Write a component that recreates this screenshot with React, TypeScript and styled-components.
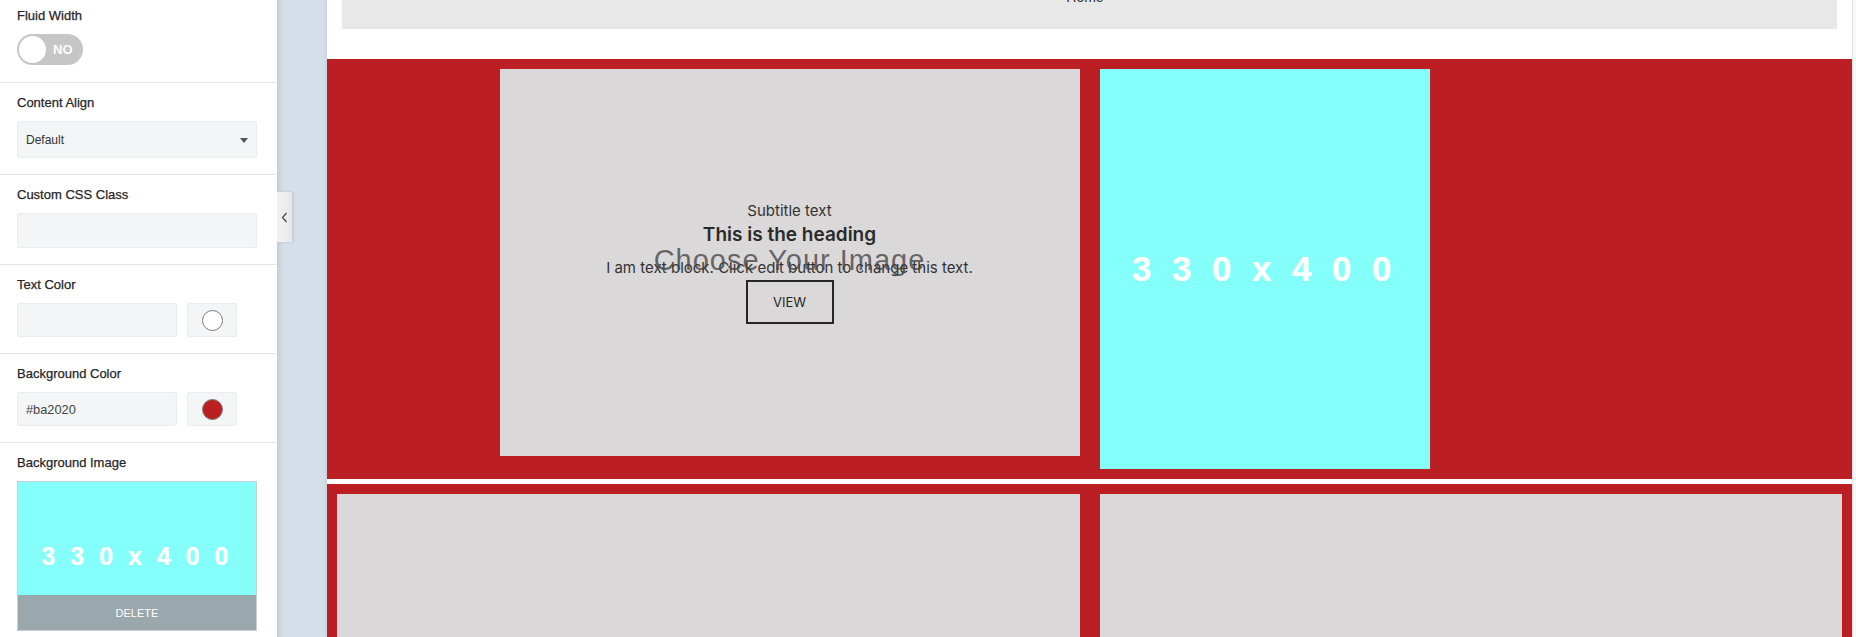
import React from "react";
import styled, { createGlobalStyle } from "styled-components";

const GlobalStyle = createGlobalStyle`
  html, body {
    margin: 0;
    padding: 0;
    width: 1856px;
    height: 637px;
    overflow: hidden;
    background: #ffffff;
  }
  body {
    font-family: "Liberation Sans", Arial, sans-serif;
  }
  *, *::before, *::after {
    box-sizing: border-box;
  }
`;

const Shell = styled.div`
  display: flex;
  width: 1856px;
  height: 637px;
  overflow: hidden;
`;

/* ---------- Sidebar ---------- */

const Sidebar = styled.aside`
  flex: 0 0 277px;
  background: #ffffff;
  position: relative;
  z-index: 2;
  overflow: hidden;
`;

const Field = styled.section<{ $first?: boolean }>`
  display: flex;
  flex-direction: column;
  align-items: flex-start;
  gap: 11px;
  padding: ${(p) => (p.$first ? "8px 20px 17px 17px" : "12px 20px 16px 17px")};
  border-top: ${(p) => (p.$first ? "none" : "1px solid #e3e5e6")};
`;

const Label = styled.div`
  font-size: 13px;
  line-height: 15px;
  color: #262626;
  -webkit-text-stroke: 0.25px #262626;
`;

const Toggle = styled.div`
  width: 66px;
  height: 31px;
  border-radius: 16px;
  background: #c6c6c6;
  display: flex;
  align-items: center;
  padding-left: 2px;
`;

const Knob = styled.span`
  width: 27px;
  height: 27px;
  border-radius: 50%;
  background: #ffffff;
`;

const ToggleText = styled.span`
  margin-left: 7px;
  font-size: 13px;
  font-weight: 700;
  color: #ffffff;
`;

const Select = styled.div`
  width: 240px;
  height: 37px;
  background: #f3f5f6;
  border: 1px solid #eaedee;
  border-radius: 2px;
  display: flex;
  align-items: center;
  justify-content: space-between;
  padding: 0 8px 0 8px;
  font-size: 12px;
  color: #333333;
`;

const Caret = styled.span`
  width: 0;
  height: 0;
  border-left: 4px solid transparent;
  border-right: 4px solid transparent;
  border-top: 5px solid #555555;
  margin-top: 1px;
`;

const TextInput = styled.div<{ $width?: number; $height?: number }>`
  width: ${(p) => p.$width ?? 240}px;
  height: ${(p) => p.$height ?? 34}px;
  background: #f3f5f6;
  border: 1px solid #eaedee;
  border-radius: 2px;
  display: flex;
  align-items: center;
  padding: 0 8px;
  font-size: 12.8px;
  color: #444444;
`;

const ColorRow = styled.div`
  display: flex;
  gap: 10px;
`;

const SwatchButton = styled.div`
  width: 50px;
  height: 34px;
  background: #f3f5f6;
  border: 1px solid #eaedee;
  border-radius: 2px;
  display: flex;
  align-items: center;
  justify-content: center;
`;

const SwatchDot = styled.span<{ $color: string }>`
  width: 21px;
  height: 21px;
  border-radius: 50%;
  background: ${(p) => p.$color};
  border: 1px solid #7a7a7a;
`;

const Preview = styled.div`
  position: relative;
  width: 240px;
  height: 150px;
  border: 1px solid #c6d1d7;
  background: #84fffa;
  display: flex;
  align-items: center;
  justify-content: center;
`;

const DeleteBar = styled.div`
  position: absolute;
  left: 0;
  right: 0;
  bottom: 0;
  height: 35px;
  background: #9aa8ae;
  color: #ffffff;
  font-size: 11px;
  display: flex;
  align-items: center;
  justify-content: center;
`;

const PlaceholderText = styled.span<{ $size: number; $spacing: number }>`
  font-family: "Liberation Sans", Arial, sans-serif;
  font-weight: 700;
  font-size: ${(p) => p.$size}px;
  letter-spacing: ${(p) => p.$spacing}px;
  color: #ffffff;
  white-space: pre;
  text-shadow: 0 0 1px rgba(255, 255, 255, 0.6);
`;

/* ---------- Workspace ---------- */

const Workspace = styled.main`
  flex: 1;
  display: flex;
  position: relative;
  background: #d4dfea;
  padding-left: 50px;
  box-shadow: inset 7px 0 5px -5px rgba(0, 0, 0, 0.1);
`;

const CollapseTab = styled.div`
  position: absolute;
  left: 0;
  top: 192px;
  width: 15px;
  height: 50px;
  background: linear-gradient(to right, #f2f2f2, #e8e8e8);
  box-shadow: 1px 0 3px rgba(0, 0, 0, 0.12);
  display: flex;
  align-items: center;
  justify-content: center;
`;

const Canvas = styled.div`
  flex: 1;
  background: #ffffff;
  overflow: hidden;
  box-shadow: 0 0 5px rgba(0, 0, 0, 0.1);
`;

const Scrollbar = styled.div`
  flex: 0 0 4px;
  background: #f7f7f7;
  border-left: 1px solid #e2e2e2;
`;

const Header = styled.header`
  padding: 0 15px;
  margin-bottom: 30px;
`;

const NavBar = styled.nav`
  height: 29px;
  background: #e8e8e8;
  display: flex;
  justify-content: center;
  align-items: flex-start;
  padding-right: 9px;
  overflow: hidden;
`;

const NavLink = styled.span`
  font-size: 14px;
  line-height: 16px;
  margin-top: -11px;
  color: #333333;
`;

const Row = styled.div`
  display: grid;
  grid-template-columns: 1fr 1fr;
  background: #bb1f23;
  padding: 10px 0;
  margin-bottom: 5px;
`;

const Column = styled.div<{ $justify: string }>`
  display: flex;
  justify-content: ${(p) => p.$justify};
  padding: 0 10px;
`;

const TextCard = styled.div<{ $width?: number; $height: number }>`
  position: relative;
  width: ${(p) => (p.$width ? `${p.$width}px` : "100%")};
  height: ${(p) => p.$height}px;
  background: #dad8d9;
  display: flex;
  flex-direction: column;
  align-items: center;
  justify-content: center;
  font-family: Inter, "Liberation Sans", sans-serif;
  color: #2a2a2a;
`;

const ImageBox = styled.div`
  width: 330px;
  height: 400px;
  background: #84fffa;
  display: flex;
  align-items: center;
  justify-content: center;
`;

const Subtitle = styled.div`
  font-size: 15px;
  line-height: 20px;
  color: #333333;
`;

const Heading = styled.h2`
  margin: 2px 0 11px;
  font-size: 19px;
  line-height: 24px;
  font-weight: 600;
  color: #2a2a2a;
`;

const Body = styled.p`
  margin: 0;
  font-size: 15px;
  line-height: 20px;
  color: #333333;
`;

const ViewButton = styled.div`
  margin-top: 2px;
  width: 88px;
  height: 44px;
  border: 2px solid #262626;
  display: flex;
  align-items: center;
  justify-content: center;
  font-size: 13px;
  color: #262626;
`;

const ChooseOverlay = styled.div`
  position: absolute;
  inset: 0;
  display: flex;
  align-items: center;
  justify-content: center;
  padding-bottom: 4px;
  font-family: "Liberation Sans", Arial, sans-serif;
  font-size: 29px;
  letter-spacing: 1px;
  color: rgba(70, 70, 70, 0.78);
  pointer-events: none;
`;

export default function App() {
  return (
    <>
      <GlobalStyle />
      <Shell>
        <Sidebar>
          <Field $first>
            <Label>Fluid Width</Label>
            <Toggle>
              <Knob />
              <ToggleText>NO</ToggleText>
            </Toggle>
          </Field>
          <Field>
            <Label>Content Align</Label>
            <Select>
              <span>Default</span>
              <Caret />
            </Select>
          </Field>
          <Field>
            <Label>Custom CSS Class</Label>
            <TextInput $height={35} />
          </Field>
          <Field>
            <Label>Text Color</Label>
            <ColorRow>
              <TextInput $width={160} />
              <SwatchButton>
                <SwatchDot $color="#ffffff" />
              </SwatchButton>
            </ColorRow>
          </Field>
          <Field>
            <Label>Background Color</Label>
            <ColorRow>
              <TextInput $width={160}>#ba2020</TextInput>
              <SwatchButton>
                <SwatchDot $color="#ba2020" />
              </SwatchButton>
            </ColorRow>
          </Field>
          <Field>
            <Label>Background Image</Label>
            <Preview>
              <PlaceholderText $size={25} $spacing={4}>3 3 0 x 4 0 0</PlaceholderText>
              <DeleteBar>DELETE</DeleteBar>
            </Preview>
          </Field>
        </Sidebar>

        <Workspace>
          <CollapseTab>
            <svg width="7" height="11" viewBox="0 0 7 11">
              <polyline points="5.5,1 1.5,5.5 5.5,10" fill="none" stroke="#444" strokeWidth="1.2" />
            </svg>
          </CollapseTab>
          <Canvas>
            <Header>
              <NavBar>
                <NavLink>Home</NavLink>
              </NavBar>
            </Header>
            <Row>
              <Column $justify="flex-end">
                <TextCard $width={580} $height={387}>
                  <Subtitle>Subtitle text</Subtitle>
                  <Heading>This is the heading</Heading>
                  <Body>I am text block. Click edit button to change this text.</Body>
                  <ViewButton>VIEW</ViewButton>
                  <ChooseOverlay>Choose Your Image</ChooseOverlay>
                </TextCard>
              </Column>
              <Column $justify="flex-start">
                <ImageBox>
                  <PlaceholderText $size={35} $spacing={5.4}>3 3 0 x 4 0 0</PlaceholderText>
                </ImageBox>
              </Column>
            </Row>
            <Row>
              <Column $justify="stretch">
                <TextCard $height={400} />
              </Column>
              <Column $justify="stretch">
                <TextCard $height={400} />
              </Column>
            </Row>
          </Canvas>
          <Scrollbar />
        </Workspace>
      </Shell>
    </>
  );
}
